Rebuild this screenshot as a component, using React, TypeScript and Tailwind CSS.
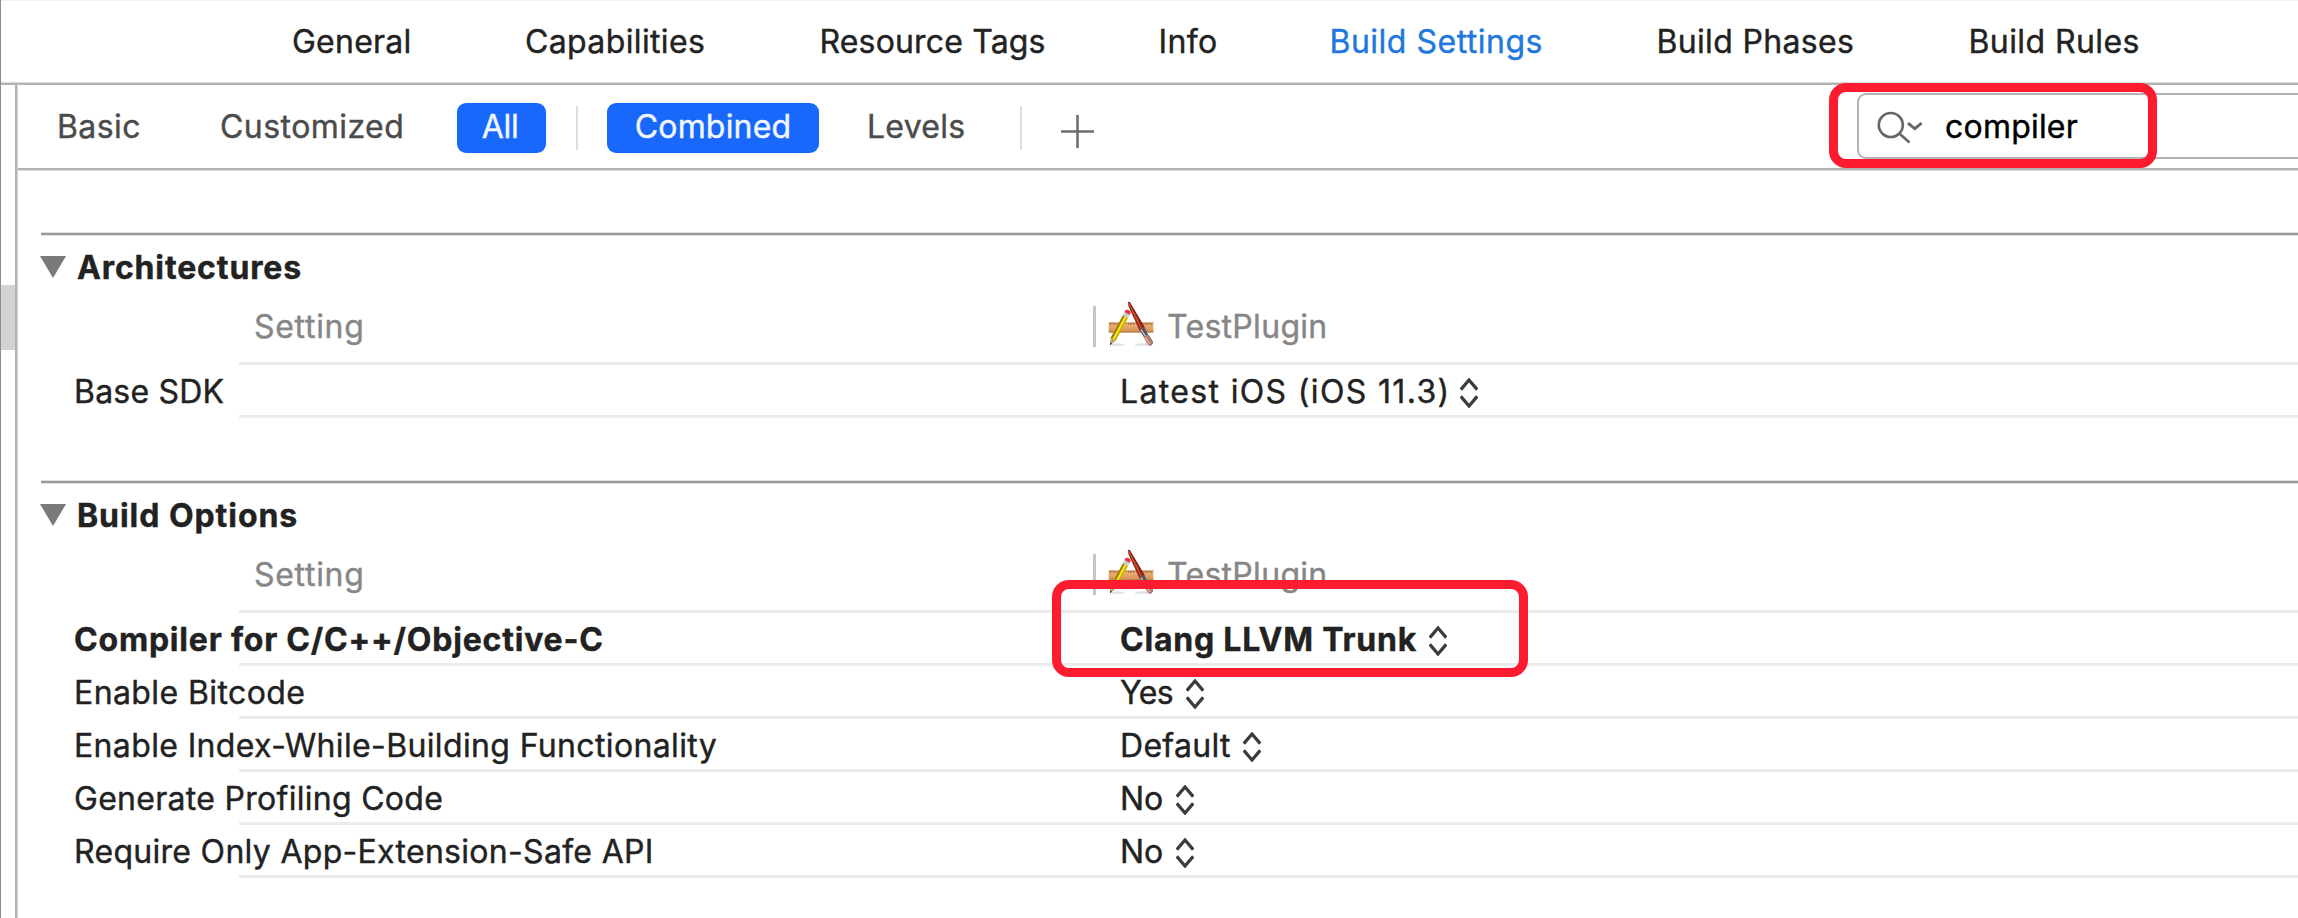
type Tab = { label: string; cls: string; active?: boolean };

type Setting = { label: string; labelCls: string; value: string; valueCls: string; bold?: boolean };

type Group = { title: string; titleCls: string; rows: Setting[]; highlight?: boolean };

const tabs: Tab[] = [
  { label: "General", cls: "w-[233px] tracking-[0.23px]" },
  { label: "Capabilities", cls: "w-[294.5px] tracking-[0.37px]" },
  { label: "Resource Tags", cls: "w-[339px] tracking-[0.16px]" },
  { label: "Info", cls: "w-[171px] tracking-[0.4px]" },
  { label: "Build Settings", cls: "w-[327px] tracking-[0.5px]", active: true },
  { label: "Build Phases", cls: "w-[312px] tracking-[0.33px]" },
  { label: "Build Rules", cls: "tracking-[0.42px]" },
];

const groups: Group[] = [
  {
    title: "Architectures",
    titleCls: "tracking-[0.87px]",
    rows: [
      {
        label: "Base SDK",
        labelCls: "tracking-[0.2px]",
        value: "Latest iOS (iOS 11.3)",
        valueCls: "tracking-[1.35px] mr-[-3px]",
      },
    ],
  },
  {
    title: "Build Options",
    titleCls: "tracking-[0.95px]",
    highlight: true,
    rows: [
      {
        label: "Compiler for C/C++/Objective-C",
        labelCls: "tracking-[0.8px]",
        value: "Clang LLVM Trunk",
        valueCls: "tracking-[0.78px] mr-[-1px]",
        bold: true,
      },
      { label: "Enable Bitcode", labelCls: "tracking-[0.4px]", value: "Yes", valueCls: "tracking-[-0.6px]" },
      {
        label: "Enable Index-While-Building Functionality",
        labelCls: "tracking-[0.36px]",
        value: "Default",
        valueCls: "tracking-[0.3px]",
      },
      { label: "Generate Profiling Code", labelCls: "tracking-[0.29px]", value: "No", valueCls: "tracking-[-0.1px]" },
      {
        label: "Require Only App-Extension-Safe API",
        labelCls: "tracking-[0.3px]",
        value: "No",
        valueCls: "tracking-[-0.1px]",
      },
    ],
  },
];

function AppIcon() {
  return (
    <svg className="mb-[6px] ml-[12px] h-[46px] w-[46px] shrink-0" viewBox="72 18 138 138">
      <defs>
        <linearGradient id="ruler" x1="0" y1="0" x2="0" y2="1">
          <stop offset="0" stopColor="#c98a50" />
          <stop offset="0.3" stopColor="#e9ae74" />
          <stop offset="0.8" stopColor="#d8935a" />
          <stop offset="1" stopColor="#b4713c" />
        </linearGradient>
      </defs>
      <ellipse cx="100" cy="149" rx="22" ry="4" fill="#000" opacity="0.12" />
      <ellipse cx="176" cy="149" rx="24" ry="4" fill="#000" opacity="0.12" />
      <rect x="74" y="82" width="134" height="31" fill="url(#ruler)" />
      <path
        d="M80 84v7M87 84v5M94 84v7M101 84v5M108 84v7M134 84v5M141 84v7M148 84v5M180 84v5M187 84v7M194 84v5M201 84v7"
        stroke="#8a5a2e"
        strokeWidth="2"
      />
      <path d="M117 61L132 68L94 139L80 128Z" fill="#f7e11c" />
      <path d="M117 61L122 63L85 132L80 128Z" fill="#8f7d14" />
      <path d="M128 66L132 68L94 139L90 136Z" fill="#c9a80e" />
      <path d="M80 127L94 138L78 151Z" fill="#b9a07a" />
      <path d="M79 142L84 146L78 151Z" fill="#333" />
      <path d="M122 51L138 58L132 69L116 61Z" fill="#c9ccd0" />
      <path d="M124 46C129 41 141 46 140 54L137 59L122 52Z" fill="#e5323c" />
      <path d="M132 20L137 21L181 97L166 106L133 33Z" fill="#9c2a17" />
      <path d="M135 25L172 101" stroke="#d0604a" strokeWidth="3" />
      <path d="M136 21L181 97" stroke="#5d160b" strokeWidth="2.5" />
      <path d="M166 105L181 96L193 120L180 127Z" fill="#55565a" />
      <path d="M171 104L185 124" stroke="#c5c7cb" strokeWidth="4" />
      <path d="M179 127L193 119L205 139C207 146 204 151 196 151C192 150 190 147 188 144Z" fill="#b98371" />
      <path d="M184 127L197 147" stroke="#dcb4a6" strokeWidth="4" />
      <path d="M193 120L205 139C207 146 204 151 196 151" fill="none" stroke="#7c5347" strokeWidth="2.5" />
    </svg>
  );
}

function Stepper() {
  return (
    <svg
      className="mt-[5px] ml-[12.5px] h-[30px] w-[18px] shrink-0"
      viewBox="0 0 18 30"
      fill="none"
      stroke="#3c3c3c"
      strokeWidth="3.2"
    >
      <path d="M0.8 11.6L9 2L17.2 11.6M0.8 18.4L9 28L17.2 18.4" />
    </svg>
  );
}

function SettingRow({ row, highlight }: { row: Setting; highlight: boolean }) {
  return (
    <>
      <div
        className={
          row.bold
            ? "relative flex h-[50px] items-center pl-[56px] font-bold"
            : "relative flex h-[50px] items-center pl-[56px]"
        }
      >
        <div className={`w-[1046px] pt-[4px] leading-[50px] ${row.labelCls}`}>{row.label}</div>
        <div className={`pt-[4px] leading-[50px] ${row.valueCls}`}>{row.value}</div>
        <Stepper />
        {highlight && (
          <div className="absolute top-[-33px] left-[1033.5px] h-[97px] w-[476px] rounded-[17px] border-[9px] border-[#fd1b30]" />
        )}
      </div>
      <div className="ml-[221px] h-[3px] bg-[#ececec]" />
    </>
  );
}

function SettingGroup({ group }: { group: Group }) {
  return (
    <section className="mb-[62px]">
      <div className="ml-[23px] h-1 border-y border-[#dedede] bg-[#9b9b9b]" />
      <div className="mt-[12px] flex h-10 pl-[22px]">
        <svg className="mt-[8px] h-[22px] w-[26px]" viewBox="0 0 26 22">
          <path d="M0 0H26L13 22Z" fill="#7a7a7a" />
        </svg>
        <h2 className={`ml-[11px] leading-10 font-bold ${group.titleCls}`}>{group.title}</h2>
      </div>
      <div className="flex h-[74px] items-center pt-[3px] text-[#868686]">
        <div className="w-[1075px] pt-px pl-[236px] leading-10 tracking-[0.7px]">Setting</div>
        <div className="h-[41px] w-[3px] bg-[#c6c6c6]" />
        <AppIcon />
        <div className="ml-[13px] pt-px leading-10 tracking-[0.3px]">TestPlugin</div>
      </div>
      <div className="ml-[221px] h-[3px] bg-[#ececec]" />
      {group.rows.map((row, i) => (
        <SettingRow key={row.label} row={row} highlight={!!group.highlight && i === 0} />
      ))}
    </section>
  );
}

function Toolbar() {
  return (
    <div className="flex h-[83px] items-center pt-[3px] pl-[39px] text-[#4b4b4b]">
      <div className="w-[163px] pb-[2px] leading-10 tracking-[0.4px]">Basic</div>
      <div className="w-[237px] pb-[2px] leading-10 tracking-[0.45px]">Customized</div>
      <div className="h-[50px] w-[89px] rounded-[9px] bg-[#1768fb] pr-[3px] text-center leading-[48px] tracking-[-0.3px] text-[#f2f6ff]">
        All
      </div>
      <div className="ml-[30px] h-[44px] w-[2px] bg-[#dcdcdc]" />
      <div className="ml-[29px] h-[50px] w-[212px] rounded-[9px] bg-[#1768fb] text-center leading-[48px] tracking-[0.19px] text-[#f2f6ff]">
        Combined
      </div>
      <div className="ml-[48px] w-[153px] pb-[2px] leading-10 tracking-[0.26px]">Levels</div>
      <div className="h-[44px] w-[2px] bg-[#dcdcdc]" />
      <svg className="mt-[6px] ml-[39px] h-[33px] w-[33px]" viewBox="0 0 33 33" stroke="#6e6e6e" strokeWidth="2.6">
        <path d="M0 16.5H33M16.5 0V33" />
      </svg>
      <div className="relative mb-[4px] ml-auto flex h-[66px] w-[441px] items-center rounded-l-[9px] border-y-2 border-l-2 border-[#b4b4b4] text-black">
        <svg
          className="mt-px ml-[18px] h-[34px] w-[50px]"
          viewBox="0 0 50 34"
          fill="none"
          stroke="#666"
          strokeWidth="2.6"
        >
          <circle cx="13.8" cy="15" r="12" />
          <path d="M22.3 23.5L32.5 32.5" />
          <path d="M31 13.2L37.8 18.6L44.6 13.2" strokeWidth="3" />
        </svg>
        <div className="mt-[2px] ml-[18px] leading-10 tracking-[0.21px]">compiler</div>
        <div className="absolute top-[-12px] left-[-30px] h-[85px] w-[328px] rounded-[17px] border-[9px] border-[#fd1b30]" />
      </div>
    </div>
  );
}

export default function App() {
  return (
    <div className="flex h-[918px] w-[2298px] overflow-hidden border-l border-[#8c8c8c] bg-white font-['Inter','Liberation_Sans',sans-serif] text-[32px] whitespace-nowrap text-[#222] [-webkit-text-stroke:0.4px]">
      <div className="flex flex-1 flex-col">
        <nav className="flex h-[82px] shrink-0 border-t border-[#f0f0f0] pt-[21px] pl-[291px]">
          {tabs.map((tab) => (
            <div key={tab.label} className={`leading-10 ${tab.cls} ${tab.active ? "text-[#2078dc]" : ""}`}>
              {tab.label}
            </div>
          ))}
        </nav>
        <div className="h-[3px] shrink-0 border-t border-[#dadada] bg-[#b3b3b3]" />
        <div className="flex min-h-0 flex-1">
          <aside className="w-[14px] pt-[200px]">
            <div className="h-[65px] bg-[#d3d3d3]" />
          </aside>
          <div className="w-[3px] border-r border-[#d8d8d8] bg-[#b3b3b3]" />
          <main className="flex-1">
            <Toolbar />
            <div className="h-[3px] border-b border-[#dadada] bg-[#b3b3b3]" />
            <div className="pt-[61px]">
              {groups.map((group) => (
                <SettingGroup key={group.title} group={group} />
              ))}
            </div>
          </main>
        </div>
      </div>
    </div>
  );
}
